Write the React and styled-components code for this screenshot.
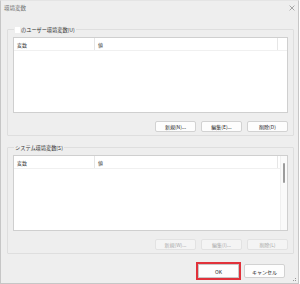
import React from 'react';
import styled, { createGlobalStyle } from 'styled-components';

const GlobalStyle = createGlobalStyle`
    html, body {
        margin: 0;
        padding: 0;
        background: #ffffff;
    }
    body {
        font-family: "Noto Sans CJK JP", "Noto Sans", sans-serif;
        color: #1b1b1b;
    }
`;

const Window = styled.div`
    width: 299px;
    height: 284px;
    box-sizing: border-box;
    background: #eeeeee;
    border: 1px solid #c6c6c6;
    border-top: 1px solid #e4e4e4;
    display: flex;
    flex-direction: column;
`;

const TitleBar = styled.div`
    height: 13px;
    display: flex;
    align-items: center;
    justify-content: space-between;
    padding: 0 3px 0 3px;
    font-size: 5.5px;
    color: #6d6d6d;
`;

const Close = styled.svg`
    width: 6px;
    height: 6px;
`;

const Content = styled.div`
    flex: 1;
    display: flex;
    flex-direction: column;
    padding: 12px 4px 0 6px;
`;

const Group = styled.fieldset`
    margin: 0 0 ${p => p.gap}px 0;
    padding: 4px 5px 3px 5px;
    border: 1px solid #dedede;
    border-radius: 1px;
    min-width: 0;
`;

const Legend = styled.legend`
    display: flex;
    align-items: center;
    gap: 1px;
    padding: 0 1px;
    margin-left: 1px;
    font-size: 5.2px;
    line-height: 7px;
    color: #333333;
`;

const Redacted = styled.span`
    width: 5px;
    height: 6px;
    background: #ffffff;
`;

const List = styled.div`
    height: 76px;
    box-sizing: border-box;
    background: #ffffff;
    border: 1px solid #cfcfcf;
    display: flex;
`;

const ListMain = styled.div`
    flex: 1;
    display: flex;
    flex-direction: column;
`;

const HeaderRow = styled.div`
    height: 12px;
    display: flex;
    border-bottom: 1px solid #f0f0f0;
`;

const HeaderCell = styled.div`
    width: ${p => p.w}px;
    box-sizing: border-box;
    display: flex;
    align-items: center;
    padding-left: 3px;
    font-size: 5px;
    color: #3a3a3a;
    border-right: ${p => (p.sep ? '1px solid #e6e6e6' : 'none')};
`;

const ScrollTrack = styled.div`
    width: 6px;
    background: #fafafa;
    border-left: 1px solid #f0f0f0;
    display: flex;
    justify-content: center;
    padding-top: 7px;
`;

const Thumb = styled.div`
    width: 2px;
    height: 20px;
    border-radius: 1px;
    background: #9c9c9c;
`;

const ButtonRow = styled.div`
    display: flex;
    justify-content: flex-end;
    gap: 5px;
    margin-top: 8px;
`;

const Button = styled.button`
    width: 41px;
    height: 11px;
    padding: 0;
    box-sizing: border-box;
    font-family: inherit;
    font-size: 5px;
    line-height: 1;
    border-radius: 2px;
    border: 1px solid ${p => (p.disabled ? '#e2e2e2' : '#d2d2d2')};
    background: ${p => (p.disabled ? '#f4f4f4' : '#fdfdfd')};
    color: ${p => (p.disabled ? '#a9a9a9' : '#222222')};
`;

const Footer = styled.div`
    display: flex;
    justify-content: flex-end;
    align-items: center;
    gap: 5px;
    padding: 0 9px 0 0;
    margin-top: 3px;
`;

const DialogButton = styled(Button)`
    height: 14px;
    background: #fdfdfd;
    border-color: ${p => (p.primary ? '#c8c8c8' : '#d2d2d2')};
    border-radius: ${p => (p.marked ? '0' : '2px')};
    outline: ${p => (p.marked ? '2px solid #e1323b' : 'none')};
    outline-offset: 0;
`;

const Grip = styled.svg`
    align-self: flex-end;
    width: 5px;
    height: 5px;
    margin: -6px 1px 1px 0;
`;

const columns = [
    { label: '変数', w: 81 },
    { label: '値', w: 183 },
];

const VarList = ({ scroll }) => (
    <List>
        <ListMain>
            <HeaderRow>
                {columns.map(c => (
                    <HeaderCell key={c.label} w={c.w} sep>
                        {c.label}
                    </HeaderCell>
                ))}
            </HeaderRow>
        </ListMain>
        {scroll && (
            <ScrollTrack>
                <Thumb />
            </ScrollTrack>
        )}
    </List>
);

const App = () => (
    <>
        <GlobalStyle />
        <Window>
            <TitleBar>
                <span>環境変数</span>
                <Close viewBox="0 0 10 10">
                    <path d="M1 1 L9 9 M9 1 L1 9" stroke="#8a8a8a" strokeWidth="1.2" />
                </Close>
            </TitleBar>
            <Content>
                <Group gap={8}>
                    <Legend>
                        <Redacted />
                        のユーザー環境変数(U)
                    </Legend>
                    <VarList />
                    <ButtonRow>
                        <Button>新規(N)...</Button>
                        <Button>編集(E)...</Button>
                        <Button>削除(D)</Button>
                    </ButtonRow>
                </Group>
                <Group gap={7}>
                    <Legend>システム環境変数(S)</Legend>
                    <VarList scroll />
                    <ButtonRow>
                        <Button disabled>新規(W)...</Button>
                        <Button disabled>編集(I)...</Button>
                        <Button disabled>削除(L)</Button>
                    </ButtonRow>
                </Group>
                <Footer>
                    <DialogButton primary marked>OK</DialogButton>
                    <DialogButton>キャンセル</DialogButton>
                </Footer>
            </Content>
            <Grip viewBox="0 0 5 5">
                <rect x="3" y="3" width="1" height="1" fill="#9a9a9a" />
                <rect x="1" y="3" width="1" height="1" fill="#9a9a9a" />
                <rect x="3" y="1" width="1" height="1" fill="#9a9a9a" />
            </Grip>
        </Window>
    </>
);

export default App;
